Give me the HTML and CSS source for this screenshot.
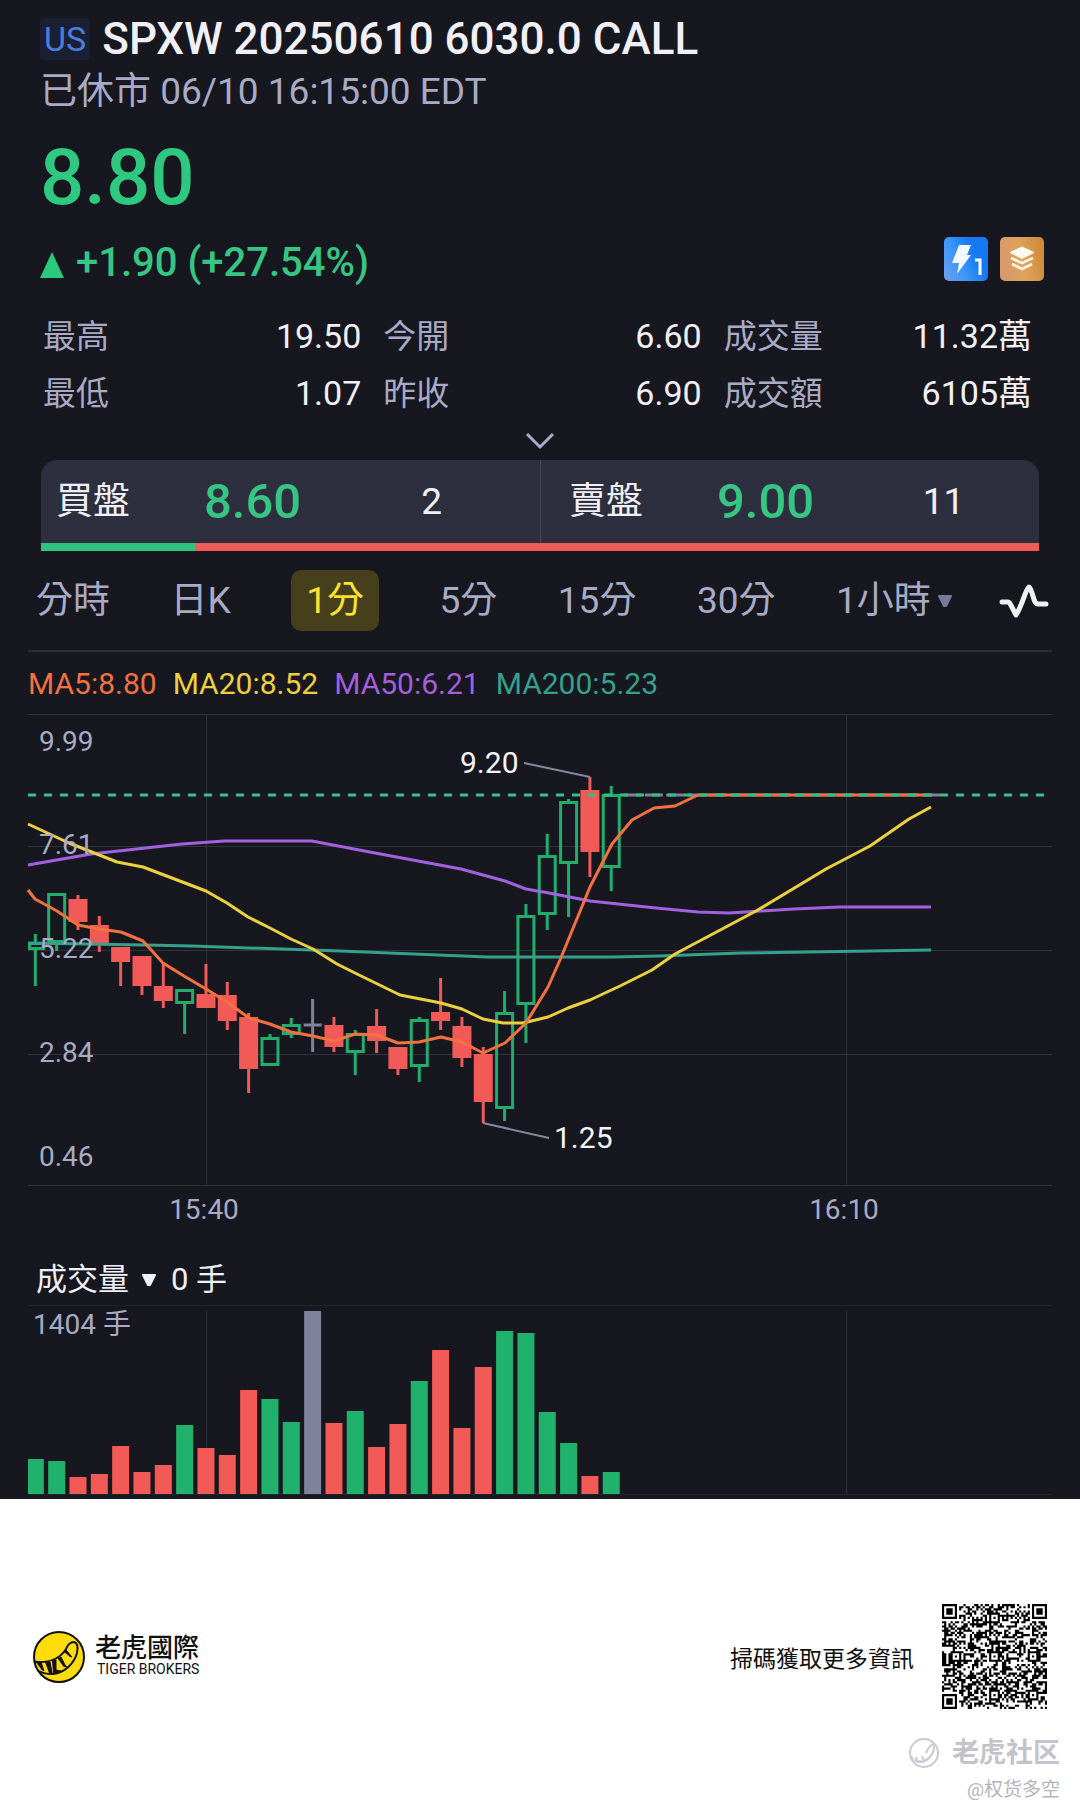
FILE: index.html
```
<!DOCTYPE html>
<html lang="zh-Hant">
<head>
    <meta charset="UTF-8">
    <meta name="viewport" content="width=device-width, initial-scale=1.0">
    <title>SPXW 20250610 6030.0 CALL</title>
    <link rel="stylesheet" href="styles.css">
</head>
<body>
    <main class="quote">
        <header class="header">
            <div class="title-row">
                <span class="market">US</span>
                <h1>SPXW 20250610 6030.0 CALL</h1>
            </div>
            <p class="status">已休市 06/10 16:15:00 EDT</p>
            <p class="price">8.80</p>
            <div class="change-row">
                <svg class="up" viewBox="0 0 24 26" aria-hidden="true"><path d="M12 0L24 26H0z"/></svg>
                <span class="change">+1.90 (+27.54%)</span>
                <button type="button" class="tag" aria-label="Level 1">
                    <svg viewBox="0 0 44 44">
                        <defs>
                            <linearGradient id="blue" x1="0" y1="0.9" x2="0.8" y2="0.5">
                                <stop offset="0" stop-color="#6f9df0"/>
                                <stop offset="0.5" stop-color="#3a97f8"/>
                                <stop offset="1" stop-color="#1578f4"/>
                            </linearGradient>
                        </defs>
                        <rect width="44" height="44" rx="5" fill="url(#blue)"/>
                        <path d="M15 8h12l-4 10h4L13 37l2-11H8z" fill="#f4faff"/>
                        <path d="M31 23h5v15" fill="none" stroke="#fff" stroke-width="3"/>
                    </svg>
                </button>
                <button type="button" class="tag" aria-label="Depth">
                    <svg viewBox="0 0 44 44">
                        <defs>
                            <linearGradient id="gold" x1="0" y1="0.6" x2="1" y2="0.4">
                                <stop offset="0" stop-color="#d9976c"/>
                                <stop offset="0.5" stop-color="#dda35c"/>
                                <stop offset="1" stop-color="#cf8a35"/>
                            </linearGradient>
                        </defs>
                        <rect width="44" height="44" rx="5" fill="url(#gold)"/>
                        <path d="M22 10l12 5.500-12 6-12-6z" fill="#fffaf0" stroke="#fffaf0" stroke-linejoin="round"/>
                        <path d="M11 21l11 5 11-5M12 27l10 5 10-5" fill="none" stroke="#fff0dc" stroke-width="3" stroke-linejoin="round"/>
                    </svg>
                </button>
            </div>
        </header>

        <dl class="stats">
            <div><dt>最高</dt><dd>19.50</dd></div>
            <div><dt>今開</dt><dd>6.60</dd></div>
            <div><dt>成交量</dt><dd>11.32萬</dd></div>
            <div><dt>最低</dt><dd>1.07</dd></div>
            <div><dt>昨收</dt><dd>6.90</dd></div>
            <div><dt>成交額</dt><dd>6105萬</dd></div>
        </dl>
        <button type="button" class="more" aria-label="展開">
            <svg viewBox="0 0 30 18"><path d="M2 2l13 13L28 2"/></svg>
        </button>

        <section class="book">
            <div class="sides">
                <div class="side">
                    <span>買盤</span>
                    <strong>8.60</strong>
                    <span class="size">2</span>
                </div>
                <div class="side ask">
                    <span>賣盤</span>
                    <strong>9.00</strong>
                    <span class="size">11</span>
                </div>
            </div>
            <div class="ratio"><div class="ratio-bid"></div></div>
        </section>

        <nav class="tabs">
            <div class="periods">
                <button type="button">分時</button>
                <button type="button">日K</button>
                <button type="button" class="active">1分</button>
                <button type="button">5分</button>
                <button type="button">15分</button>
                <button type="button">30分</button>
                <label class="picker">
                    <select aria-label="週期">
                        <option>1小時</option>
                        <option>2小時</option>
                        <option>4小時</option>
                    </select>
                    <svg viewBox="0 0 16 12"><path d="M2 1h12L9 11H7z"/></svg>
                </label>
            </div>
            <button type="button" class="indicator" aria-label="指標">
                <svg viewBox="0 0 50 34"><path d="M3 18h6c2 0 2 2 8 13 7-11 9-25 13-28 4 3 4 17 9 17h8"/></svg>
            </button>
        </nav>

        <ul class="averages">
            <li class="ma5">MA5:8.80</li>
            <li class="ma20">MA20:8.52</li>
            <li class="ma50">MA50:6.21</li>
            <li class="ma200">MA200:5.23</li>
        </ul>

        <svg class="chart" id="candles" viewBox="0 714 1080 526" role="img" aria-label="1分K線">
            <g class="grid">
                <path d="M28 714.500h1024M28 846.500h1024M28 950.500h1024M28 1054.500h1024M28 1185.500h1024M206.500 714v471M846.500 714v471"/>
            </g>
        </svg>

        <div class="volume-head">
            <label class="picker">
                <select aria-label="副圖指標">
                    <option>成交量</option>
                </select>
                <svg viewBox="0 0 16 12"><path d="M2 1h12L9 11H7z"/></svg>
            </label>
            <span>0 手</span>
        </div>
        <svg class="chart" id="volume" viewBox="0 1304 1080 195" role="img" aria-label="成交量">
            <path class="faint" d="M28 1305.500h1024M28 1494.500h1024"/>
            <path class="grid" d="M206.500 1311v183M846.500 1311v183"/>
            <text class="axis" x="33" y="1334">1404 手</text>
        </svg>
    </main>

    <footer class="footer">
        <div class="promo">
            <svg class="logo" viewBox="0 0 52 52" aria-hidden="true">
                <circle cx="26" cy="26" r="25" fill="#fedd0b" stroke="#111" stroke-width="2"/>
                <path d="M2 31c13 1 25-3 31-13 2-5 5-7 8-7 4 1 4 6 3 11-3 11-13 20-24 21-6 0-11-1-14-3" fill="none" stroke="#111" stroke-width="2"/>
                <path d="M2 30l6 1 3 9-3-2M12 31l5 0 2 11-3 0M19 30l4-1 0 10 5 1-2 1-6 1M25 28l3-2 4 8 2 2-4-1M31 21l2-2 6 7-3-1" fill="#111" stroke="#111"/>
            </svg>
            <div class="brand">
                <span class="brand-zh">老虎國際</span>
                <span class="brand-en">TIGER BROKERS</span>
            </div>
            <span class="scan">掃碼獲取更多資訊</span>
            <svg class="qr" id="qr" viewBox="0 0 49 49" role="img" aria-label="QR code"></svg>
        </div>
        <div class="community">
            <svg viewBox="0 0 32 32" aria-hidden="true">
                <circle cx="16" cy="16" r="14"/>
                <path d="M3 19l2 4M8 20l2 5 3-1M14 19l2 5 3-2M18 16c3-7 7-11 8-6 0 7-6 14-13 15-3 0-5-1-7-2"/>
            </svg>
            <span>老虎社区</span>
        </div>
        <p class="author">@权货多空</p>
    </footer>
    <script src="chart.js"></script>
</body>
</html>
```
FILE: styles.css
```
* {
    box-sizing: border-box;
}

body {
    margin: 0;
    background-color: #fff;
    font-family: Roboto, "Noto Sans CJK TC", sans-serif;
}

h1, p, dl, dd, ul {
    margin: 0;
    padding: 0;
}

button, select {
    appearance: none;
    margin: 0;
    padding: 0;
    border: none;
    background: none;
    color: inherit;
    font: inherit;
    cursor: pointer;
}

svg {
    display: block;
}

.quote {
    background-color: #16171f;
    color: #f0f0f6;
}

/* Title, price and change */
.header {
    padding: 16px 36px 0 40px;
}

.title-row {
    display: flex;
    align-items: center;
    gap: 12px;
    height: 46px;
}

.market {
    padding: 0 4px;
    border-radius: 4px;
    background-color: #1a2033;
    color: #4a7de0;
    font-size: 34px;
    line-height: 42px;
}

h1 {
    font-size: 44px;
    font-weight: 500;
    line-height: 46px;
}

.status {
    margin-top: 4px;
    color: #a9abc6;
    font-size: 37px;
    line-height: 52px;
}

.price {
    margin-top: 20px;
    color: #2fc880;
    font-size: 78px;
    font-weight: 500;
    line-height: 80px;
}

.change-row {
    display: flex;
    gap: 12px;
    margin-top: 19px;
    color: #36c583;
}

.up {
    width: 24px;
    height: 26px;
    margin-top: 15px;
    fill: #2cc87c;
}

.change {
    flex: 1;
    font-size: 40px;
    font-weight: 500;
    line-height: 52px;
}

.tag {
    width: 44px;
    height: 44px;
}

/* High, low, open, close, turnover */
.stats {
    display: grid;
    grid-template-columns: 32fr 32fr 31fr;
    column-gap: 22px;
    padding: 19px 48px 0 43px;
    font-size: 33px;
    line-height: 57px;
}

.stats div {
    display: flex;
    justify-content: space-between;
}

.stats dt {
    color: #a9abc6;
}

.stats dd {
    font-size: 34px;
}

.more {
    display: block;
    width: 100%;
    height: 38px;
}

.more svg {
    width: 30px;
    height: 18px;
    margin: 0 auto;
    fill: none;
    stroke: #a9abc6;
    stroke-width: 3;
}

/* Bid and ask */
.book {
    margin: 0 41px;
}

.sides {
    display: grid;
    grid-template-columns: 1fr 1fr;
    overflow: hidden;
    border-radius: 16px 16px 0 0;
    background-color: #2e2f3e;
}

.side {
    display: flex;
    align-items: center;
    gap: 74px;
    padding-left: 15px;
    font-size: 37px;
    line-height: 83px;
}

.side strong {
    color: #36c583;
    font-size: 49px;
    font-weight: 500;
}

.side .size {
    flex: 1;
    margin-left: -52px;
    text-align: center;
}

.ask {
    padding-left: 28px;
    border-left: 1px solid #434455;
}

.ask .size {
    margin-left: -40px;
}

.ratio {
    height: 8px;
    background-color: #ef5b5b;
}

.ratio-bid {
    width: 15.4%;
    height: 8px;
    background-color: #2fc27c;
}

/* Period tabs */
.tabs {
    display: flex;
    align-items: center;
    gap: 46px;
    margin: 0 28px;
    padding: 19px 3px 19px 8px;
    border-bottom: 2px solid #2d2e35;
    color: #a9abc6;
    font-size: 37px;
    line-height: 61px;
}

.periods {
    display: flex;
    flex: 1;
    justify-content: space-between;
}

.active {
    padding: 0 15px;
    border-radius: 10px;
    background-color: #453f1c;
    color: #fbe22f;
}

.picker {
    display: flex;
    align-items: center;
    gap: 6px;
}

.picker svg {
    width: 16px;
    height: 12px;
    fill: currentColor;
    stroke: currentColor;
    stroke-width: 2;
    stroke-linejoin: round;
}

.tabs .picker svg {
    color: #787a9c;
}

.indicator svg {
    width: 50px;
    height: 34px;
    fill: none;
    stroke: #f0f0f0;
    stroke-width: 5;
    stroke-linecap: round;
    stroke-linejoin: round;
}

/* Moving average legend */
.averages {
    display: flex;
    gap: 16px;
    padding: 2px 28px 0;
    font-size: 30px;
    line-height: 60px;
    list-style: none;
}

.ma5 {
    color: #f27140;
    stroke: #f27140;
}

.ma20 {
    color: #ecd03f;
    stroke: #ecd03f;
}

.ma50 {
    color: #a35fdc;
    stroke: #a262df;
}

.ma200 {
    color: #35a08c;
    stroke: #35a08c;
}

/* Charts */
.chart {
    width: 100%;
    height: auto;
}

.grid {
    stroke: #303139;
    fill: none;
}

.faint {
    stroke: #22232c;
}

.axis {
    fill: #a9abc6;
    font-size: 28px;
}

.mark {
    fill: #f4f4f8;
    font-size: 30px;
}

.line {
    fill: none;
    stroke-width: 3;
    stroke-linejoin: round;
}

.leader {
    stroke: #85879f;
    stroke-width: 2;
}

.last {
    stroke: #35c083;
    stroke-width: 3;
    stroke-dasharray: 8 8;
}

.flat {
    stroke: #80829c;
    stroke-width: 3;
}

.g-wick, .g-body {
    fill: none;
    stroke: #22ad6c;
    stroke-width: 3;
}

.r-wick {
    stroke: #ef5a5a;
    stroke-width: 3;
}

.r-body, .r-bar {
    fill: #f25a58;
}

.g-bar {
    fill: #20b26c;
}

.n-bar {
    fill: #80829c;
}

.volume-head {
    display: flex;
    gap: 14px;
    padding: 16px 36px 0;
    font-size: 31px;
    line-height: 48px;
}

.volume-head .picker {
    gap: 12px;
}

/* Footer */
.footer {
    padding: 105px 20px 12px 33px;
    color: #111;
}

.promo {
    display: flex;
    align-items: center;
    padding-right: 13px;
}

.logo {
    width: 52px;
    height: 52px;
}

.brand {
    display: flex;
    flex: 1;
    flex-direction: column;
    margin-left: 10px;
}

.brand-zh {
    font-size: 26px;
    font-weight: 500;
    line-height: 24px;
}

.brand-en {
    padding-left: 2px;
    font-size: 14px;
    line-height: 18px;
}

.scan {
    margin-right: 28px;
    font-size: 23px;
}

.qr {
    width: 105px;
    height: 105px;
}

.community {
    display: flex;
    align-items: center;
    justify-content: flex-end;
    gap: 12px;
    margin-top: 28px;
    color: #c3c3cb;
    font-family: Roboto, "Noto Sans CJK SC", sans-serif;
    font-size: 27px;
    font-weight: 700;
    line-height: 32px;
}

.community svg {
    width: 32px;
    height: 32px;
    fill: none;
    stroke: #c9c9d2;
    stroke-width: 2;
}

.author {
    margin-top: 8px;
    color: #b4b4ba;
    font-family: Roboto, "Noto Sans CJK SC", sans-serif;
    font-size: 19px;
    line-height: 26px;
    text-align: right;
}
```
FILE: chart.js
```
const NS = "http://www.w3.org/2000/svg";
const LEFT = 28;
const FIRST = 35.33;
const STEP = 21.33;

// type, wick top, wick bottom, body top, body bottom, volume bar top
const bars = [
  ["g", 934, 986, 942, 950, 1459],
  ["g", 894, 951, 893, 943, 1461],
  ["r", 895, 930, 899, 922, 1477],
  ["r", 916, 952, 925, 943, 1474],
  ["r", 947, 986, 947, 962, 1446],
  ["r", 956, 995, 956, 986, 1472],
  ["r", 963, 1008, 986, 1001, 1465],
  ["g", 989, 1034, 989, 1004, 1425],
  ["r", 964, 1008, 994, 1008, 1448],
  ["r", 982, 1030, 995, 1021, 1455],
  ["r", 1013, 1093, 1017, 1069, 1390],
  ["g", 1034, 1066, 1037, 1066, 1399],
  ["g", 1018, 1038, 1024, 1035, 1422],
  ["n", 999, 1052, 1025, 1025, 1311],
  ["r", 1017, 1052, 1025, 1047, 1423],
  ["g", 1030, 1075, 1033, 1053, 1411],
  ["r", 1009, 1053, 1026, 1041, 1447],
  ["r", 1047, 1075, 1047, 1069, 1424],
  ["g", 1017, 1082, 1019, 1067, 1381],
  ["r", 978, 1030, 1012, 1021, 1350],
  ["r", 1017, 1067, 1026, 1058, 1428],
  ["r", 1047, 1123, 1054, 1102, 1367],
  ["g", 991, 1121, 1012, 1109, 1331],
  ["g", 904, 1043, 915, 1005, 1333],
  ["g", 834, 930, 855, 915, 1412],
  ["g", 799, 917, 801, 864, 1443],
  ["r", 777, 877, 790, 852, 1476],
  ["g", 786, 891, 794, 868, 1472]
];

const lines = {
  ma200: "28,943 145,945 192,946 340,951 487,957 613,957 660,956 740,953 870,951 931,950",
  ma50: "28,865 91,854 182,844 224,841 312,841 375,853 461,869 505,881 526,889 549,893 590,901 656,908 698,912 729,913 794,909 840,907 931,907",
  ma20: "28,824 69,843 117,862 143,867 206,891 227,903 248,917 270,928 291,939 313,949 337,964 355,973 400,995 441,1003 462,1009 483,1019 503,1023 523,1023 548,1017 568,1008 590,1000 620,986 652,970 675,954 756,911 826,869 870,846 909,819 931,807",
  ma5: "28,890 35,899 57,911 78,925 99,929 121,932 143,941 163,963 184,976 206,989 227,1002 249,1018 270,1024 291,1032 313,1036 334,1041 355,1034 377,1035 398,1043 419,1042 441,1037 462,1042 483,1053 505,1043 526,1023 548,987 560,960 590,887 612,844 632,820 654,808 675,806 698,795 931,795"
};

function add(parent, name, cls, attrs, text) {
  const el = document.createElementNS(NS, name);
  el.setAttribute("class", cls);
  for (const key in attrs) el.setAttribute(key, attrs[key]);
  if (text) el.textContent = text;
  parent.appendChild(el);
  return el;
}

const chart = document.getElementById("candles");
const volume = document.getElementById("volume");

bars.forEach(([type, high, low, top, bottom, vol], i) => {
  const x = FIRST + i * STEP;
  const left = Math.max(LEFT, x - 9.5);
  const width = x + 9.5 - left;
  if (type === "g") {
    add(chart, "path", "g-wick", { d: `M${x} ${high}V${top}M${x} ${bottom}V${Math.max(low, bottom)}` });
    add(chart, "rect", "g-body", { x: left + 1.5, y: top + 1.5, width: width - 3, height: bottom - top - 3 });
  } else if (type === "r") {
    add(chart, "path", "r-wick", { d: `M${x} ${high}V${low}` });
    add(chart, "rect", "r-body", { x: left, y: top, width: width, height: bottom - top });
  } else {
    add(chart, "path", "flat", { d: `M${x} ${high}V${low}M${x - 9} ${top}H${x + 9}` });
  }
  const barLeft = Math.max(LEFT, x - 8.5);
  add(volume, "rect", type + "-bar", { x: barLeft, y: vol, width: x + 8.5 - barLeft, height: 1494 - vol });
});

// minutes without a trade
for (let i = bars.length; i < 43; i++) {
  const x = FIRST + i * STEP;
  add(chart, "path", "flat", { d: `M${x - 9} 795H${x + 9}` });
}

for (const name in lines) {
  add(chart, "polyline", "line " + name, { points: lines[name] });
}
add(chart, "path", "last", { d: "M28 795H1044" });

add(chart, "path", "leader", { d: "M524 763L590 777M483 1123L549 1138" });
add(chart, "text", "mark", { x: 460, y: 773 }, "9.20");
add(chart, "text", "mark", { x: 554, y: 1148 }, "1.25");

[["9.99", 751], ["7.61", 854], ["5.22", 958], ["2.84", 1062], ["0.46", 1166]].forEach(([t, y]) => {
  add(chart, "text", "axis", { x: 39, y: y }, t);
});
add(chart, "text", "axis", { x: 204, y: 1219, "text-anchor": "middle" }, "15:40");
add(chart, "text", "axis", { x: 844, y: 1219, "text-anchor": "middle" }, "16:10");

// QR code, 49 x 49 modules
const N = 49;
let seed = 20250610;

function square(x, y, cx, cy, r) {
  const d = Math.max(Math.abs(x - cx), Math.abs(y - cy));
  return d <= r ? d : -1;
}

function dark(x, y) {
  seed = (seed * 1103515245 + 12345) % 2147483648;
  const random = seed / 2147483648 < 0.5;
  for (const [cx, cy] of [[3, 3], [45, 3], [3, 45]]) {
    const d = square(x, y, cx, cy, 4);
    if (d >= 0) return d !== 2 && d !== 4;
  }
  for (const [cx, cy] of [[24, 6], [6, 24], [24, 24], [42, 24], [24, 42], [42, 42]]) {
    const d = square(x, y, cx, cy, 2);
    if (d >= 0) return d !== 1;
  }
  if (x === 6 || y === 6) return (x + y) % 2 === 0;
  return random;
}

let modules = "";
for (let y = 0; y < N; y++) {
  for (let x = 0; x < N; x++) {
    if (dark(x, y)) modules += `M${x} ${y}h1v1h-1z`;
  }
}
add(document.getElementById("qr"), "path", "modules", { d: modules });
```
